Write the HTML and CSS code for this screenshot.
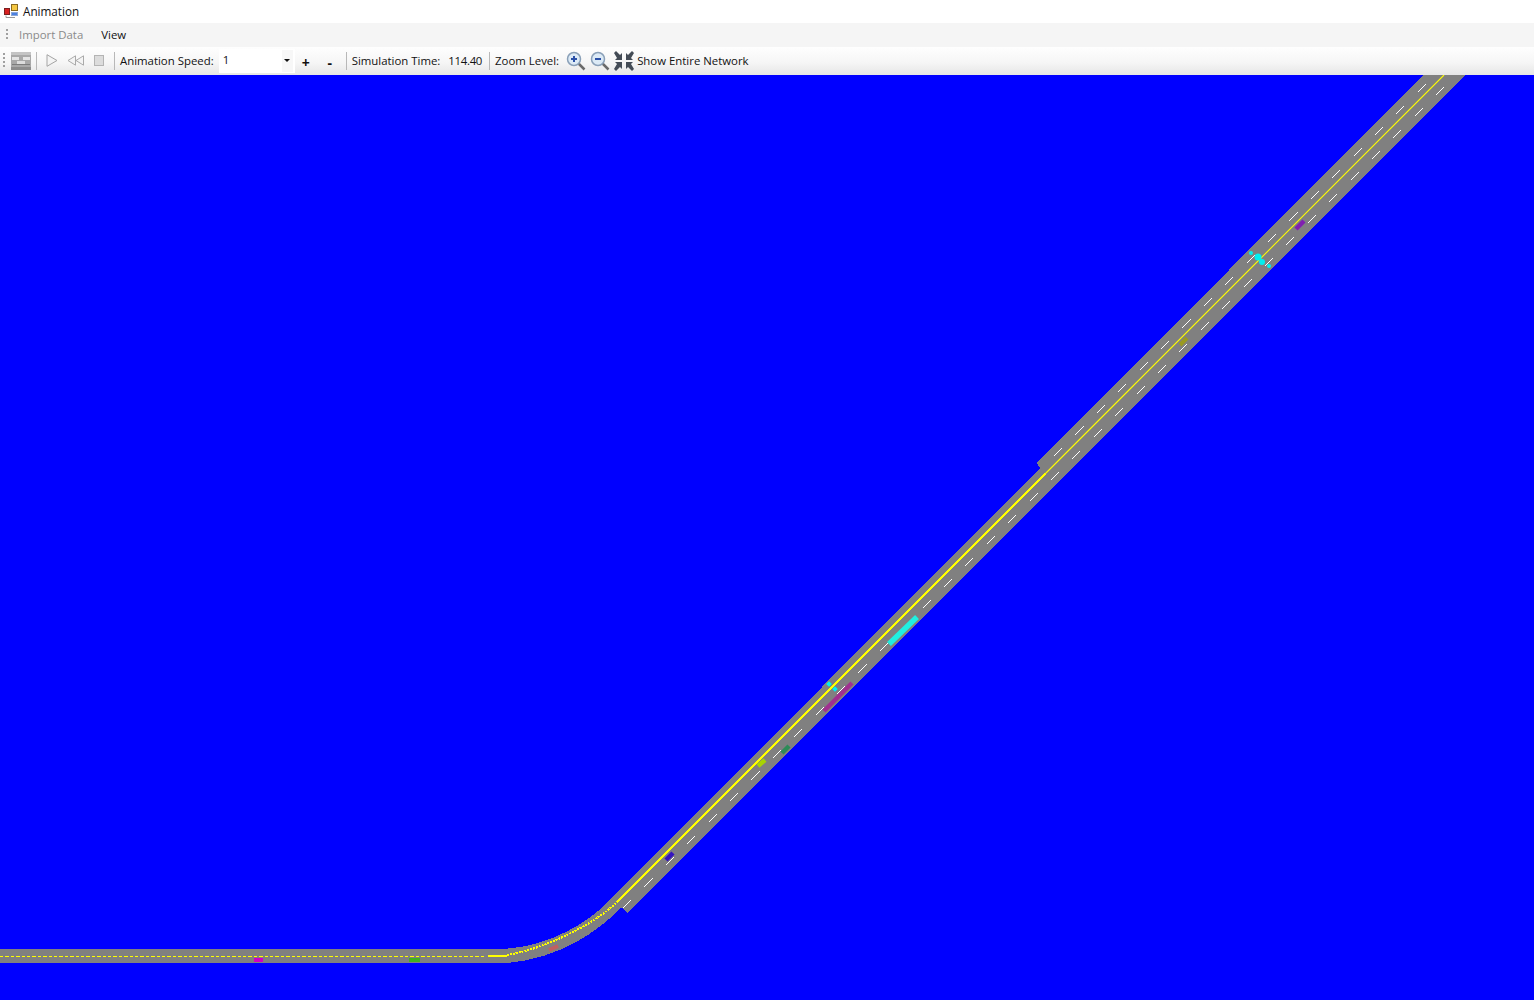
FILE: index.html
```html
<!DOCTYPE html>
<html lang="en">
<head>
<meta charset="utf-8">
<title>Animation</title>
<link rel="stylesheet" href="styles.css">
</head>
<body>
<div class="window">
  <header class="titlebar">
    <svg class="app-icon" width="16" height="16" viewBox="0 0 16 16">
      <rect x="8.500" y="1.500" width="6" height="6" fill="#f5c842" stroke="#8a6a20"/>
      <rect x="1.500" y="5.500" width="5" height="6" fill="#d92020" stroke="#7a2020"/>
      <rect x="8.500" y="9.500" width="6" height="3" fill="#4a80e0" stroke="#8aa6d8"/>
      <path d="M3 12.500v2h9" fill="none" stroke="#9a9a9a"/>
    </svg>
    <span>Animation</span>
  </header>
  <nav class="menubar">
    <span class="grip grip-menu"></span>
    <span class="menu-item disabled">Import Data</span>
    <span class="menu-item">View</span>
  </nav>
  <div class="toolbar">
    <span class="grip grip-tool"></span>
    <svg class="tool-img" width="20" height="18" viewBox="0 0 20 18">
      <rect width="20" height="18" fill="#a8a8a8"/>
      <rect y="0" width="20" height="3" fill="#c4c4c4"/>
      <rect y="15" width="20" height="3" fill="#8c8c8c"/>
      <rect x="1" y="5" width="7" height="3" fill="#e4e4e4"/>
      <rect x="12" y="5" width="7" height="3" fill="#e4e4e4"/>
      <rect x="6" y="9" width="8" height="3" fill="#dcdcdc"/>
      <rect x="1" y="12" width="18" height="1" fill="#7c7c7c"/>
    </svg>
    <span class="sep sep-a"></span>
    <svg class="tool-play" width="12" height="13" viewBox="0 0 12 13"><path d="M1 .7v11.600L11 6.500z" fill="#f4f4f4" stroke="#a4a4a4"/></svg>
    <svg class="tool-rew" width="18" height="11" viewBox="0 0 18 11"><path d="M8.500 .8v9.400L1 5.500zM16.500 .8v9.400L9 5.500z" fill="#f4f4f4" stroke="#aaa"/></svg>
    <svg class="tool-stop" width="10" height="11" viewBox="0 0 10 11"><rect x=".5" y=".5" width="9" height="10" fill="#dcdcdc" stroke="#b4b4b4"/></svg>
    <span class="sep sep-b"></span>
    <span class="label label-speed">Animation Speed:</span>
    <div class="combo"><span class="combo-value">1</span><span class="combo-btn"><span class="combo-arrow"></span></span></div>
    <span class="step step-plus">+</span>
    <span class="step step-minus">-</span>
    <span class="sep sep-c"></span>
    <span class="label label-time">Simulation Time:</span>
    <span class="label label-value">114.40</span>
    <span class="sep sep-d"></span>
    <span class="label label-zoom">Zoom Level:</span>
    <svg class="tool-lens" width="20" height="20" viewBox="0 0 20 20">
      <line x1="12" y1="12" x2="18.500" y2="18.500" stroke="#6a6a6a" stroke-width="2.500"/>
      <circle cx="8" cy="8" r="6.500" fill="#dceaf6" stroke="#8aa0b8" stroke-width="1.500"/>
      <path d="M5 8h6M8 5v6" stroke="#2a50a8" stroke-width="2"/>
    </svg>
    <svg class="tool-lens lens-out" width="20" height="20" viewBox="0 0 20 20">
      <line x1="12" y1="12" x2="18.500" y2="18.500" stroke="#6a6a6a" stroke-width="2.500"/>
      <circle cx="8" cy="8" r="6.500" fill="#dceaf6" stroke="#8aa0b8" stroke-width="1.500"/>
      <path d="M5 8h6" stroke="#2a50a8" stroke-width="2"/>
    </svg>
    <svg class="tool-shrink" width="20" height="20" viewBox="0 0 20 20" fill="#444c56">
      <path d="M0 2l2-2 4 4 2-2v7H1l2-2zM20 2l-2-2-4 4-2-2v7h7l-2-2zM0 18l2 2 4-4 2 2v-7H1l2 2zM20 18l-2 2-4-4-2 2v-7h7l-2 2z"/>
    </svg>
    <span class="label label-show">Show Entire Network</span>
  </div>
  <main class="canvas">
    <svg class="network" width="1534" height="925" viewBox="0 75 1534 925">
      <g shape-rendering="crispEdges">
        <path class="road" d="M0 949H497C544 949 585 925 608 902L1040 468L1037 463L1423 75H1465L627 913L621.500 907.500C597 932 560 958 508 963H0Z"/>
        <line class="lane" x1="623" y1="908" x2="1480" y2="51"/>
        <line class="lane" x1="1054" y1="456" x2="1460" y2="50"/>
        <line class="center-dash" x1="0" y1="956.500" x2="485" y2="956.500"/>
        <line class="center-solid" x1="488" y1="955.500" x2="507" y2="955.500"/>
        <path class="center-curve" d="M507 955C540 950 592 927 618 901"/>
        <line class="center-thick" x1="618" y1="901" x2="1045" y2="474"/>
      </g>
      <line class="center-thin" x1="1045" y1="474" x2="1444" y2="75"/>
      <g>
        <rect class="v-magenta" x="254" y="958" width="9" height="4"/>
        <rect class="v-lime" x="409" y="958" width="11" height="4"/>
        <line class="veh v-red" x1="549" y1="950" x2="558" y2="946"/>
        <line class="veh v-indigo" x1="666" y1="860" x2="673" y2="853"/>
        <line class="veh v-sea" x1="782" y1="753" x2="789" y2="746"/>
        <line class="veh v-yellow" x1="758" y1="766" x2="765" y2="760"/>
        <line class="veh v-plum" x1="824" y1="711" x2="852" y2="683"/>
        <line class="veh v-cyan-long" x1="889" y1="644" x2="917" y2="617"/>
        <rect class="v-cyan" x="827" y="682" width="4" height="4" transform="rotate(45 829 684)"/>
        <rect class="v-cyan" x="833" y="687" width="4" height="4" transform="rotate(45 835 689)"/>
        <line class="veh v-olive" x1="1180" y1="345" x2="1187" y2="338"/>
        <line class="veh v-violet" x1="1296" y1="229" x2="1304" y2="221"/>
        <circle class="v-cyan" cx="1251" cy="253" r="2"/>
        <circle class="v-cyan" cx="1258" cy="257" r="3.500"/>
        <circle class="v-cyan" cx="1262" cy="262" r="3"/>
        <circle class="v-cyan" cx="1269" cy="266" r="2"/>
      </g>
    </svg>
  </main>
</div>
</body>
</html>
```

FILE: styles.css
```css
html, body {
  margin: 0;
  padding: 0;
  background: #0000ff;
}
.window {
  width: 1534px;
  height: 1000px;
  display: flex;
  flex-direction: column;
  overflow: hidden;
  font-family: "Open Sans", "Noto Sans", "Liberation Sans", sans-serif;
  font-size: 11.400px;
  color: #111;
}
.titlebar {
  height: 23px;
  background: #fff;
  display: flex;
  align-items: center;
  gap: 4px;
  padding-left: 3px;
  padding-bottom: 1px;
  font-size: 11.700px;
  box-sizing: border-box;
}
.menubar {
  height: 24px;
  background: #f5f5f5;
  display: flex;
  align-items: center;
  padding-bottom: 1px;
  box-sizing: border-box;
}
.grip {
  display: block;
  width: 2px;
  background-image: linear-gradient(#a0a0a0 50%, transparent 50%);
  background-size: 2px 4px;
}
.grip-menu {
  height: 12px;
  margin-left: 6px;
}
.grip-tool {
  height: 16px;
  margin-left: 3px;
}
.menu-item.disabled {
  color: #8a8a8a;
  margin-left: 11px;
}
.menu-item {
  margin-left: 18px;
}
.toolbar {
  height: 28px;
  background: linear-gradient(#fefefe, #f6f6f6 55%, #e6e6e6);
  display: flex;
  align-items: center;
  padding-bottom: 1px;
  box-sizing: border-box;
}
.tool-img { margin-left: 6px; }
.sep {
  width: 1px;
  height: 18px;
  background: #b8b8b8;
}
.sep-a { margin-left: 5px; }
.tool-play { margin-left: 9px; }
.tool-rew { margin-left: 9px; }
.tool-stop { margin-left: 9px; }
.sep-b { margin-left: 10px; }
.label-speed { margin-left: 5px; }
.combo {
  width: 76px;
  height: 24px;
  margin-left: 5px;
  background: #fff;
  display: flex;
  align-items: center;
  justify-content: space-between;
  box-sizing: border-box;
}
.combo-value { margin-left: 4px; margin-top: -2px; }
.combo-btn {
  width: 11px;
  height: 22px;
  margin-right: 2px;
  background: #f7f7f7;
  display: flex;
  align-items: center;
  justify-content: center;
}
.combo-arrow {
  width: 0;
  height: 0;
  border: 3px solid transparent;
  border-top-color: #111;
  border-bottom: 0;
}
.step {
  font-weight: 700;
  font-size: 14px;
  margin-top: 3px;
  width: 10px;
  text-align: center;
}
.step-plus { margin-left: 6px; }
.step-minus { margin-left: 14px; }
.sep-c { margin-left: 11px; }
.label-time { margin-left: 5px; }
.label-value { margin-left: 8px; letter-spacing: -0.3px; }
.sep-d { margin-left: 7px; }
.label-zoom { margin-left: 5px; }
.tool-lens { margin-left: 7px; }
.lens-out { margin-left: 4px; }
.tool-shrink { margin-left: 4px; }
.label-show { margin-left: 3px; }
.canvas {
  flex: 1;
  background: #0000ff;
  overflow: hidden;
}
.network { display: block; }
.road { fill: #808080; }
.lane {
  stroke: #fff;
  stroke-width: 1;
  stroke-dasharray: 11.500 18.760;
}
.center-dash {
  stroke: #ffff00;
  stroke-width: 1;
  stroke-dasharray: 3.400 2;
}
.center-solid {
  stroke: #ffff00;
  stroke-width: 2;
}
.center-curve {
  fill: none;
  stroke: #ffff00;
  stroke-width: 2;
  stroke-dasharray: 2 1;
}
.center-thick {
  stroke: #ffff00;
  stroke-width: 2;
}
.center-thin {
  stroke: #ffff00;
  stroke-width: 1.100;
}
.veh {
  stroke-width: 4.500;
  stroke-linecap: butt;
}
.v-magenta { fill: #d000c4; }
.v-lime { fill: #40b020; }
.v-red { stroke: #c06060; stroke-width: 4; }
.v-indigo { stroke: #3414c0; }
.v-sea { stroke: #2e8b57; }
.v-yellow { stroke: #a8d400; }
.v-plum { stroke: #a03090; }
.v-cyan-long { stroke: #20f0e0; stroke-width: 5.500; }
.v-cyan { fill: #00f0f0; }
.v-olive { stroke: #9a9a20; stroke-width: 4; }
.v-violet { stroke: #8020b0; }
```
